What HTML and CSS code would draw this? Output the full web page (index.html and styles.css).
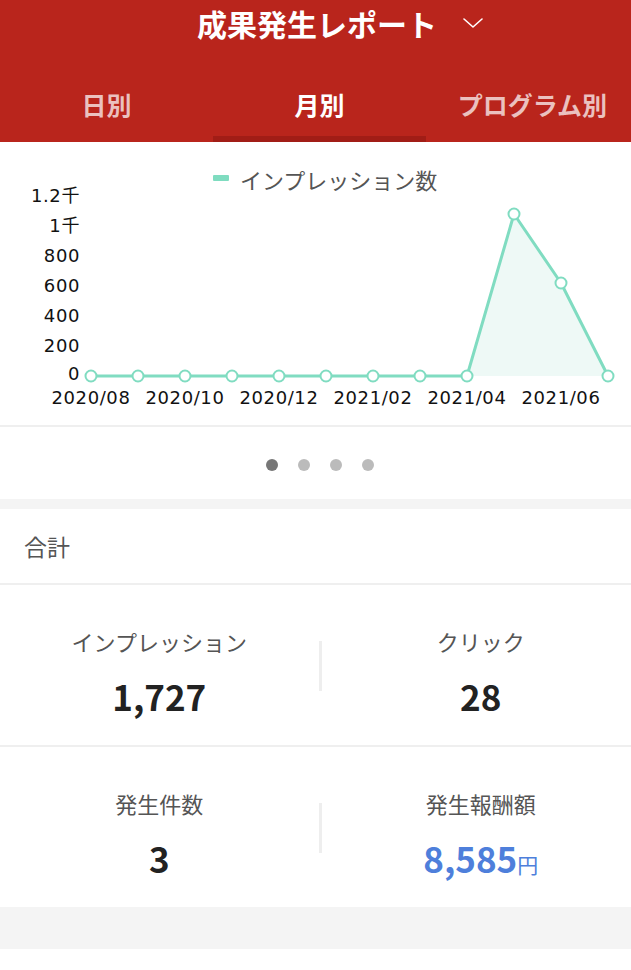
FILE: index.html
```html
<!DOCTYPE html>
<html lang="ja">
<head>
    <meta charset="UTF-8">
    <meta name="viewport" content="width=device-width, initial-scale=1.0">
    <title>成果発生レポート</title>
    <link rel="stylesheet" href="styles.css">
</head>
<body>
<div class="app">
    <header class="top">
        <div class="title-row">
            <h1 class="title">成果発生レポート</h1>
            <svg class="chevron" width="20" height="10" viewBox="0 0 20 10">
                <polyline points="1,1 10,9 19,1" fill="none" stroke="#fff" stroke-width="1.6" stroke-linecap="round" stroke-linejoin="round"/>
            </svg>
        </div>
        <nav class="tabs">
            <div class="tab">日別</div>
            <div class="tab active">月別</div>
            <div class="tab">プログラム別</div>
        </nav>
    </header>

    <section class="chart-card">
        <svg class="chart" width="640" height="283" viewBox="0 0 640 283">
            <!-- 凡例 -->
            <rect x="213" y="33" width="16" height="6" rx="1" fill="#7fdcc0"/>
            <text class="legend" x="240" y="37">インプレッション数</text>

            <!-- Y軸 -->
            <text class="axis" x="80" y="53" text-anchor="end">1.2千</text>
            <text class="axis" x="80" y="83" text-anchor="end">1千</text>
            <text class="axis" x="80" y="113" text-anchor="end">800</text>
            <text class="axis" x="80" y="143" text-anchor="end">600</text>
            <text class="axis" x="80" y="173" text-anchor="end">400</text>
            <text class="axis" x="80" y="203" text-anchor="end">200</text>
            <text class="axis" x="80" y="231" text-anchor="end">0</text>

            <!-- X軸 -->
            <text class="axis" x="91" y="255" text-anchor="middle">2020/08</text>
            <text class="axis" x="185" y="255" text-anchor="middle">2020/10</text>
            <text class="axis" x="279" y="255" text-anchor="middle">2020/12</text>
            <text class="axis" x="373" y="255" text-anchor="middle">2021/02</text>
            <text class="axis" x="467" y="255" text-anchor="middle">2021/04</text>
            <text class="axis" x="561" y="255" text-anchor="middle">2021/06</text>

            <!-- データ -->
            <polygon points="467,234 514,72 561,141 608,234" fill="#eef9f6"/>
            <polyline points="91,234 138,234 185,234 232,234 279,234 326,234 373,234 420,234 467,234 514,72 561,141 608,234" fill="none" stroke="#80dcc1" stroke-width="3" stroke-linejoin="round"/>
            <g fill="#fff" stroke="#80dcc1" stroke-width="2">
                <circle cx="91" cy="234" r="5.5"/>
                <circle cx="138" cy="234" r="5.5"/>
                <circle cx="185" cy="234" r="5.5"/>
                <circle cx="232" cy="234" r="5.5"/>
                <circle cx="279" cy="234" r="5.5"/>
                <circle cx="326" cy="234" r="5.5"/>
                <circle cx="373" cy="234" r="5.5"/>
                <circle cx="420" cy="234" r="5.5"/>
                <circle cx="467" cy="234" r="5.5"/>
                <circle cx="514" cy="72" r="5.5"/>
                <circle cx="561" cy="141" r="5.5"/>
                <circle cx="608" cy="234" r="5.5"/>
            </g>
        </svg>
        <div class="pager">
            <span class="dot active"></span>
            <span class="dot"></span>
            <span class="dot"></span>
            <span class="dot"></span>
        </div>
    </section>

    <div class="gap"></div>

    <section class="summary">
        <div class="summary-head">合計</div>
        <div class="stat-row">
            <div class="stat">
                <div class="stat-label">インプレッション</div>
                <div class="stat-value">1,727</div>
            </div>
            <div class="stat-divider"></div>
            <div class="stat">
                <div class="stat-label">クリック</div>
                <div class="stat-value">28</div>
            </div>
        </div>
        <div class="stat-row">
            <div class="stat">
                <div class="stat-label">発生件数</div>
                <div class="stat-value">3</div>
            </div>
            <div class="stat-divider"></div>
            <div class="stat">
                <div class="stat-label">発生報酬額</div>
                <div class="stat-value value-blue">8,585<span class="yen">円</span></div>
            </div>
        </div>
    </section>

    <div class="bottom-gap"></div>
</div>
</body>
</html>
```

FILE: styles.css
```css
html, body {
    margin: 0;
    padding: 0;
    overflow: hidden;
    background: #fff;
}
body {
    font-family: "Noto Sans CJK JP", "Noto Sans", sans-serif;
    color: #333;
}
.app {
    width: 640px;
}

/* ヘッダー */
.top {
    background-color: #b9251c;
}
.title-row {
    display: flex;
    justify-content: center;
    align-items: center;
    height: 46px;
}
.title {
    margin: 0 0 0 -6px;
    font-size: 30px;
    font-weight: bold;
    line-height: 46px;
    color: #fff;
}
.chevron {
    margin-left: 26px;
    margin-right: -46px;
}
.tabs {
    display: flex;
}
.tab {
    flex: 0 0 213px;
    text-align: center;
    font-size: 25px;
    font-weight: bold;
    line-height: 26px;
    padding-top: 45px;
    padding-bottom: 19px;
    border-bottom: 6px solid transparent;
    color: rgba(255, 255, 255, 0.72);
}
.tab.active {
    color: #fff;
    border-bottom-color: #a11d16;
}

/* グラフ */
.chart-card {
    background: #fff;
}
.chart {
    display: block;
}
.legend {
    font-size: 22px;
    fill: #555;
    dominant-baseline: central;
}
.axis {
    font-family: "DejaVu Sans", "Noto Sans CJK JP", sans-serif;
    font-size: 18px;
    letter-spacing: 0.6px;
    fill: #111;
    dominant-baseline: central;
}
.pager {
    display: flex;
    justify-content: center;
    align-items: center;
    gap: 20px;
    height: 68px;
    padding-top: 4px;
    border-top: 2px solid #efefef;
}
.dot {
    width: 12px;
    height: 12px;
    border-radius: 50%;
    background: #bbb;
}
.dot.active {
    background: #777;
}
.gap {
    height: 10px;
    background: #f4f4f4;
}

/* 合計 */
.summary {
    background: #fff;
}
.summary-head {
    height: 74px;
    line-height: 74px;
    padding-left: 24px;
    font-size: 23px;
    color: #555;
    border-bottom: 2px solid #efefef;
}
.stat-row {
    display: grid;
    grid-template-columns: 1fr 3px 1fr;
    align-items: start;
    padding: 42px 0 29px;
}
.stat-row + .stat-row {
    border-top: 2px solid #efefef;
}
.stat {
    text-align: center;
}
.stat-label {
    font-size: 22px;
    line-height: 28px;
    color: #555;
}
.stat-value {
    margin-top: 21px;
    height: 40px;
    font-size: 35px;
    font-weight: bold;
    line-height: 40px;
    color: #222;
}
.value-blue {
    color: #4e7fdb;
}
.yen {
    font-size: 21px;
    font-weight: normal;
    line-height: 1;
}
.stat-divider {
    margin-top: 14px;
    height: 50px;
    background: #eee;
}
.bottom-gap {
    height: 42px;
    background: #f4f4f4;
}
```
